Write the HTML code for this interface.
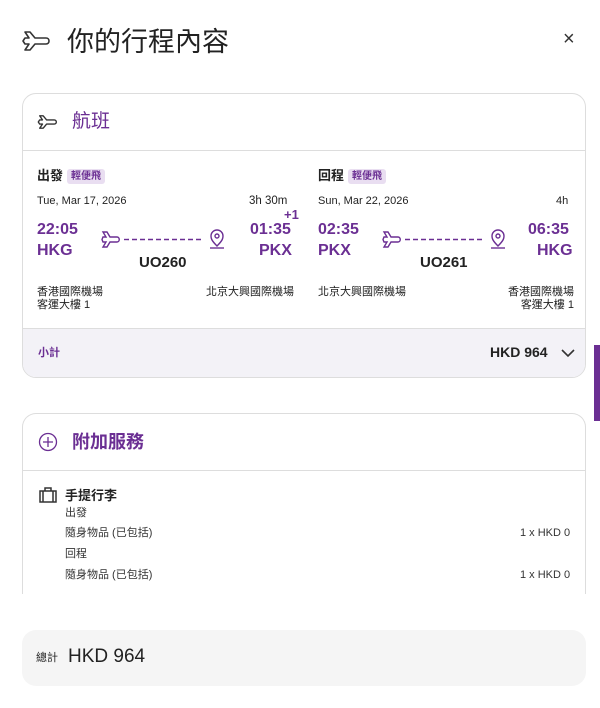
<!DOCTYPE html>
<html><head><meta charset="utf-8"><style>
*{margin:0;padding:0;box-sizing:border-box}
body{width:600px;height:708px;background:#fff;font-family:"Liberation Sans","Noto Sans CJK TC",sans-serif;color:#222;position:relative;overflow:hidden}
.abs{position:absolute}
.card{position:absolute;left:22px;width:564px;border:1px solid #ddd;border-radius:14px;background:#fff;overflow:hidden}
.purple{color:#6b2f93}
.b{font-weight:bold}
.tag{display:inline-block;background:#e9def1;color:#6b2f93;font-size:10px;padding:1px 4px;border-radius:3px;font-weight:bold;vertical-align:middle;margin-left:4px;line-height:13px}
.s11{font-size:11px;line-height:13px}
</style></head><body>
<svg class="abs" style="left:22px;top:28px" width="30" height="26" viewBox="0 0 30 26" fill="none" stroke="#333" stroke-width="1.6" stroke-linejoin="round"><path d="M3 4 L8 4 L13 10 L24 10 C28 10 28 16 24 16 L13 16 L8 22 L3 22 L7 16 L3 16 L1 13 L3 10 L7 10 Z"/></svg>
<div class="abs" style="left:67px;top:20px;font-size:27px;color:#222">你的行程內容</div>
<div class="abs" style="left:563px;top:28px;font-size:20px;color:#333">×</div>

<div class="card" style="top:93px;height:285px">
  <div style="height:57px;border-bottom:1px solid #ddd;position:relative">
    <svg class="abs" style="left:14px;top:19px" width="22" height="18" viewBox="0 0 30 26" fill="none" stroke="#333" stroke-width="2" stroke-linejoin="round"><path d="M3 4 L8 4 L13 10 L24 10 C28 10 28 16 24 16 L13 16 L8 22 L3 22 L7 16 L3 16 L1 13 L3 10 L7 10 Z"/></svg>
    <div class="abs purple" style="left:49px;top:12px;font-size:19px">航班</div>
  </div>
  <div class="abs" style="left:0;top:234px;width:564px;height:51px;background:#f3f2f7;border-top:1px solid #ddd">
    <div class="abs purple b" style="left:15px;top:15px;font-size:11px">小計</div>
    <div class="abs b" style="left:467px;top:15px;font-size:14px;color:#222">HKD 964</div>
    <svg class="abs" style="left:538px;top:19px" width="14" height="10" viewBox="0 0 14 10"><path d="M1 2 L7 8 L13 2" fill="none" stroke="#333" stroke-width="1.6"/></svg>
  </div>
</div>
<!-- left flight -->
<div class="abs b" style="left:37px;top:165px;font-size:13px">出發<span class="tag">輕便飛</span></div>
<div class="abs s11" style="left:37px;top:195px">Tue, Mar 17, 2026</div>
<div class="abs s11" style="left:249px;top:195px;font-size:11.5px">3h 30m</div>
<div class="abs purple b" style="left:284px;top:207px;font-size:13px">+1</div>
<div class="abs purple b" style="left:37px;top:221px;font-size:16px">22:05</div>
<div class="abs purple b" style="left:37px;top:242px;font-size:16px">HKG</div>
<div class="abs purple b" style="left:250px;top:221px;font-size:16px">01:35</div>
<div class="abs purple b" style="left:259px;top:242px;font-size:16px">PKX</div>
<div class="abs b" style="left:139px;top:254px;font-size:15px">UO260</div>
<div class="abs s11" style="left:37px;top:286px">香港國際機場<br>客運大樓 1</div>
<div class="abs s11" style="left:206px;top:286px">北京大興國際機場</div>
<!-- right flight -->
<div class="abs b" style="left:318px;top:165px;font-size:13px">回程<span class="tag">輕便飛</span></div>
<div class="abs s11" style="left:318px;top:195px">Sun, Mar 22, 2026</div>
<div class="abs s11" style="left:556px;top:195px">4h</div>
<div class="abs purple b" style="left:318px;top:221px;font-size:16px">02:35</div>
<div class="abs purple b" style="left:318px;top:242px;font-size:16px">PKX</div>
<div class="abs purple b" style="left:528px;top:221px;font-size:16px">06:35</div>
<div class="abs purple b" style="left:537px;top:242px;font-size:16px">HKG</div>
<div class="abs b" style="left:420px;top:254px;font-size:15px">UO261</div>
<div class="abs s11" style="left:318px;top:286px">北京大興國際機場</div>
<div class="abs s11" style="left:508px;top:286px;text-align:right">香港國際機場<br><span style="padding-left:12px">客運大樓 1</span></div>
<!-- route graphics -->
<svg class="abs" style="left:100px;top:228px" width="130" height="24" viewBox="0 0 130 24" fill="none" stroke="#6b2f93" stroke-width="1.4"><path d="M3 4 L7 4 L10 9 L17 9 C20 9 20 14 17 14 L10 14 L7 19 L3 19 L6 14 L3 14 L2 11.5 L3 9 L6 9 Z"/><path d="M24 11.5 H104" stroke-dasharray="5 3"/><path d="M117 18 C111 12 111 10 111 8 A6 6 0 0 1 123 8 C123 10 123 12 117 18 Z"/><circle cx="117" cy="8" r="2"/><path d="M110 20 H124"/></svg>
<svg class="abs" style="left:381px;top:228px" width="130" height="24" viewBox="0 0 130 24" fill="none" stroke="#6b2f93" stroke-width="1.4"><path d="M3 4 L7 4 L10 9 L17 9 C20 9 20 14 17 14 L10 14 L7 19 L3 19 L6 14 L3 14 L2 11.5 L3 9 L6 9 Z"/><path d="M24 11.5 H104" stroke-dasharray="5 3"/><path d="M117 18 C111 12 111 10 111 8 A6 6 0 0 1 123 8 C123 10 123 12 117 18 Z"/><circle cx="117" cy="8" r="2"/><path d="M110 20 H124"/></svg>

<div class="abs" style="left:594px;top:345px;width:6px;height:76px;background:#6b2f93"></div>

<div class="card" style="top:413px;height:200px;border-bottom:none;border-radius:14px 14px 0 0">
  <div style="height:57px;border-bottom:1px solid #ddd;position:relative">
    <svg class="abs" style="left:15px;top:18px" width="20" height="20" viewBox="0 0 20 20" fill="none" stroke="#6b2f93" stroke-width="1.3"><circle cx="10" cy="10" r="8.5"/><path d="M10 5 V15 M5 10 H15"/></svg>
    <div class="abs purple b" style="left:49px;top:14px;font-size:18px">附加服務</div>
  </div>
  <svg class="abs" style="left:16px;top:73px" width="18" height="16" viewBox="0 0 18 16" fill="none" stroke="#333" stroke-width="1.5"><rect x="1" y="4" width="16" height="11"/><path d="M6 4 V1 H12 V4 M4 4 V15 M14 4 V15"/></svg>
  <div class="abs b" style="left:42px;top:71px;font-size:13px">手提行李</div>
  <div class="abs s11" style="left:42px;top:93px;color:#333">出發</div>
  <div class="abs s11" style="left:42px;top:113px;color:#333">隨身物品 (已包括)</div>
  <div class="abs s11" style="left:497px;top:113px;color:#333">1 x HKD 0</div>
  <div class="abs s11" style="left:42px;top:134px;color:#333">回程</div>
  <div class="abs s11" style="left:42px;top:155px;color:#333">隨身物品 (已包括)</div>
  <div class="abs s11" style="left:497px;top:155px;color:#333">1 x HKD 0</div>
</div>
<div class="abs" style="left:0;top:594px;width:600px;height:36px;background:#fff"></div>
<div class="abs" style="left:22px;top:630px;width:564px;height:56px;background:#f5f5f5;border-radius:14px">
  <div class="abs" style="left:14px;top:19px;font-size:11px">總計</div>
  <div class="abs" style="left:46px;top:16px;font-size:19px;color:#222">HKD 964</div>
</div>
</body></html>
